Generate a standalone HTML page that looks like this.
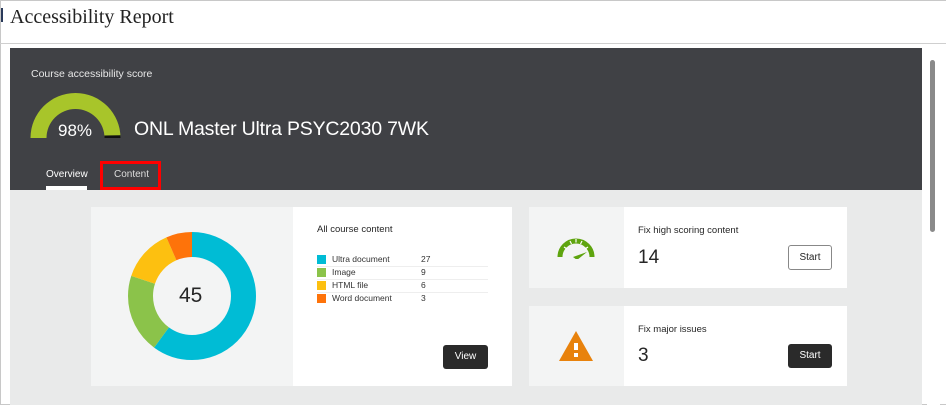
<!DOCTYPE html>
<html><head><style>
*{margin:0;padding:0;box-sizing:border-box}
body{width:946px;height:405px;background:#fff;font-family:"Liberation Sans",sans-serif;position:relative;overflow:hidden;color:#262626}
.abs{position:absolute}
</style></head><body>
<div class="abs" style="left:0;top:0;width:946px;height:405px;border:1px solid #c8c8c8;border-right:none"></div>
<div class="abs" style="left:1px;top:8px;width:2px;height:14px;background:#2a3a5a"></div>
<div class="abs" style="left:10px;top:6px;font-family:'Liberation Serif',serif;font-size:20px;color:#222">Accessibility Report</div>
<div class="abs" style="left:0;top:43px;width:946px;height:1px;background:#cfcfcf"></div>
<div class="abs" style="left:10px;top:48px;width:912px;height:357px;background:#e9eaea"></div>
<div class="abs" style="left:10px;top:48px;width:912px;height:142px;background:#404145"></div>
<div class="abs" style="left:31px;top:68px;font-size:10.5px;color:#e8e8e8">Course accessibility score</div>
<svg class="abs" style="left:30px;top:92px" width="92" height="48" viewBox="0 0 92 48">
<path d="M0.5 46 A45 45 0 0 1 90.5 46 L74.5 46 A29 29 0 0 0 16.5 46 Z" fill="#a8c52a"/>
<path d="M90.5 46 L74.5 46 L74.4 43.5 L90.4 43.2 Z" fill="#111"/>
</svg>
<div class="abs" style="left:58px;top:121px;font-size:17px;color:#fff">98%</div>
<div class="abs" style="left:134px;top:118px;font-size:19.5px;color:#fff;letter-spacing:-0.2px">ONL Master Ultra PSYC2030 7WK</div>
<div class="abs" style="left:46px;top:169px;font-size:10px;color:#fff">Overview</div>
<div class="abs" style="left:46px;top:186px;width:41px;height:4px;background:#fff"></div>
<div class="abs" style="left:100px;top:161px;width:61px;height:29px;border:3px solid #f00"></div>
<div class="abs" style="left:114px;top:169px;font-size:10px;color:#ddd">Content</div>

<div class="abs" style="left:91px;top:207px;width:202px;height:179px;background:#f3f4f4"></div>
<svg class="abs" style="left:128px;top:232px" width="128" height="128" viewBox="0 0 128 128">
<g transform="rotate(-90 64 64)" fill="none" stroke-width="25">
<circle cx="64" cy="64" r="51.5" stroke="#00bcd5" stroke-dasharray="194.2 400"/>
<circle cx="64" cy="64" r="51.5" stroke="#8bc34a" stroke-dasharray="0 194.2 64.7 400"/>
<circle cx="64" cy="64" r="51.5" stroke="#fdc010" stroke-dasharray="0 258.9 43.1 400"/>
<circle cx="64" cy="64" r="51.5" stroke="#fe730a" stroke-dasharray="0 302 21.6 400"/>
</g></svg>
<div class="abs" style="left:179px;top:284px;font-size:21px;color:#262626">45</div>
<div class="abs" style="left:293px;top:207px;width:219px;height:179px;background:#fff"></div>
<div class="abs" style="left:317px;top:224px;font-size:9.5px">All course content</div>
<div class="abs" style="left:317px;top:254px;width:171px;font-size:8.5px;color:#333">
<div style="height:13px;border-bottom:1px solid #eee;position:relative"><span style="position:absolute;left:0;top:1px;width:9px;height:9px;background:#00bcd5"></span><span style="position:absolute;left:15px">Ultra document</span><span style="position:absolute;left:104px">27</span></div>
<div style="height:13px;border-bottom:1px solid #eee;position:relative"><span style="position:absolute;left:0;top:1px;width:9px;height:9px;background:#8bc34a"></span><span style="position:absolute;left:15px">Image</span><span style="position:absolute;left:104px">9</span></div>
<div style="height:13px;border-bottom:1px solid #eee;position:relative"><span style="position:absolute;left:0;top:1px;width:9px;height:9px;background:#fdc010"></span><span style="position:absolute;left:15px">HTML file</span><span style="position:absolute;left:104px">6</span></div>
<div style="height:13px;position:relative"><span style="position:absolute;left:0;top:1px;width:9px;height:9px;background:#fe730a"></span><span style="position:absolute;left:15px">Word document</span><span style="position:absolute;left:104px">3</span></div>
</div>
<div class="abs" style="left:443px;top:345px;width:45px;height:24px;background:#2a2a2a;border-radius:3px;color:#fff;font-size:10px;text-align:center;line-height:24px">View</div>

<div class="abs" style="left:529px;top:207px;width:95px;height:81px;background:#f3f4f4"></div>
<div class="abs" style="left:624px;top:207px;width:223px;height:81px;background:#fff"></div>
<svg class="abs" style="left:557px;top:235px" width="38" height="24" viewBox="0 0 38 24">
<path d="M3 22 A16 16 0 0 1 35 22" fill="none" stroke="#5ea40e" stroke-width="5"/>
<g stroke="#fff" stroke-width="1.2"><line x1="7" y1="12" x2="10" y2="14"/><line x1="13" y1="6" x2="14.5" y2="9"/><line x1="19" y1="4" x2="19" y2="7.5"/><line x1="25" y1="6" x2="23.5" y2="9"/><line x1="31" y1="12" x2="28" y2="14"/></g>
<path d="M16 22 L30 17 L20 25 Z" fill="#5ea40e"/>
</svg>
<div class="abs" style="left:638px;top:225px;font-size:9.5px">Fix high scoring content</div>
<div class="abs" style="left:638px;top:247px;font-size:19px">14</div>
<div class="abs" style="left:788px;top:245px;width:44px;height:25px;border:1px solid #888;border-radius:3px;font-size:10px;text-align:center;line-height:23px">Start</div>

<div class="abs" style="left:529px;top:306px;width:95px;height:80px;background:#f3f4f4"></div>
<div class="abs" style="left:624px;top:306px;width:223px;height:80px;background:#fff"></div>
<svg class="abs" style="left:558px;top:331px" width="36" height="31" viewBox="0 0 36 31">
<path d="M18 0 L35 30 L1 30 Z" fill="#e8820c"/>
<rect x="16" y="12" width="4" height="7" fill="#fff"/><rect x="16" y="22" width="4" height="4" fill="#fff"/>
</svg>
<div class="abs" style="left:638px;top:324px;font-size:9.5px">Fix major issues</div>
<div class="abs" style="left:638px;top:345px;font-size:19px">3</div>
<div class="abs" style="left:788px;top:344px;width:44px;height:24px;background:#2a2a2a;border-radius:3px;color:#fff;font-size:10px;text-align:center;line-height:24px">Start</div>

<div class="abs" style="left:927px;top:48px;width:13px;height:357px;background:#fff"></div>
<div class="abs" style="left:930px;top:60px;width:5px;height:172px;background:#8a8a8a;border-radius:3px"></div>
</body></html>
